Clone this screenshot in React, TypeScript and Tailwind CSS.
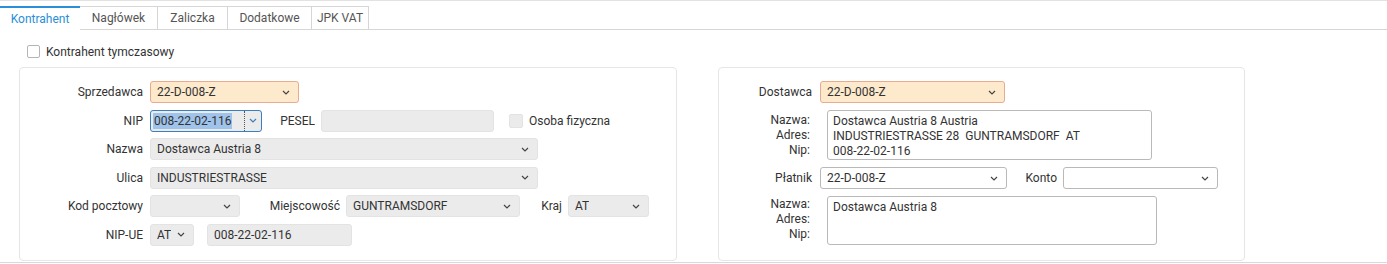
import React from 'react';

const font = { fontFamily: 'Roboto, "Liberation Sans", sans-serif' };

function Chevron({ className = '' }: { className?: string }) {
  return (
    <svg width="8" height="5" viewBox="0 0 8 5" className={className}>
      <path d="M1 1l3 3 3-3" fill="none" stroke="#444" strokeWidth="1.2" />
    </svg>
  );
}

function Select({ value = '', w, tone = 'gray' }: { value?: string; w: string; tone?: 'gray' | 'orange' | 'white' }) {
  const tones = {
    gray: 'bg-[#ebebeb] border-[#e3e3e3]',
    orange: 'bg-[#fde9cc] border-[#e8ab90]',
    white: 'bg-white border-[#b9b9b9]',
  };
  return (
    <div className={`${w} h-[22px] shrink-0 flex items-center justify-between border rounded-[3px] pl-[6px] pr-[8px] ${tones[tone]}`}>
      <span className="truncate">{value}</span>
      <Chevron />
    </div>
  );
}

function Input({ value = '', w }: { value?: string; w: string }) {
  return (
    <div className={`${w} h-[22px] shrink-0 flex items-center border border-[#e3e3e3] bg-[#ebebeb] rounded-[3px] px-[6px]`}>
      {value}
    </div>
  );
}

function Label({ text, w, pr = 'pr-[7px]' }: { text: string; w: string; pr?: string }) {
  return <div className={`${w} ${pr} shrink-0 text-right`}>{text}</div>;
}

const tabs = ['Kontrahent', 'Nagłówek', 'Zaliczka', 'Dodatkowe', 'JPK VAT'];
const tabWidths = ['w-[80px]', 'w-[78px]', 'w-[70px]', 'w-[84px]', 'w-[57px]'];

export default function App() {
  return (
    <div className="w-[1387px] h-[264px] bg-white text-[12px] text-[#333] border-t border-[#e2e2e2] overflow-hidden" style={font}>
      {/* Tabs */}
      <div className="flex mt-[5px] h-[24px]">
        {tabs.map((t, i) => (
          <div
            key={t}
            className={`${tabWidths[i]} flex items-center justify-center ${
              i === 0
                ? 'border-t-2 border-[#2a8fd6] text-[#2a8fd6] border-b border-b-white'
                : 'border border-l-0 border-[#d6d6d6] text-[#555] first:border-l'
            }`}
          >
            {t}
          </div>
        ))}
        <div className="flex-1 border-b border-[#d6d6d6]" />
      </div>

      {/* Kontrahent tymczasowy */}
      <div className="flex items-center mt-[15px] ml-[27px] h-[13px]">
        <div className="w-[13px] h-[13px] border border-[#b5b5b5] rounded-[2px] bg-white" />
        <span className="ml-[6px]">Kontrahent tymczasowy</span>
      </div>

      <div className="flex mt-[9px] ml-[19px] gap-[41px]">
        {/* Sprzedawca */}
        <div className="w-[658px] h-[194px] border border-[#e6e6e6] rounded-[4px] pt-[13px] flex flex-col gap-[6.6px]">
          <div className="flex items-center">
            <Label text="Sprzedawca" w="w-[130px]" />
            <Select value="22-D-008-Z" w="w-[149px]" tone="orange" />
          </div>
          <div className="flex items-center">
            <Label text="NIP" w="w-[130px]" />
            <div className="w-[112px] h-[22px] shrink-0 flex items-center border border-[#3a7fbf] rounded-[3px] bg-[#ebebeb]">
              <div className="flex-1 h-full flex items-center pl-[2px] border-r border-dotted border-[#555]">
                <span className="bg-[#9fc3ea] px-[1px] leading-[16px]">008-22-02-116</span>
              </div>
              <div className="w-[16px] flex justify-center">
                <svg width="8" height="5" viewBox="0 0 8 5">
                  <path d="M1 1l3 3 3-3" fill="none" stroke="#3a7fbf" strokeWidth="1.2" />
                </svg>
              </div>
            </div>
            <Label text="PESEL" w="w-[59px]" pr="pr-[6px]" />
            <Input w="w-[173px]" />
            <div className="ml-[15px] w-[14px] h-[14px] bg-[#ebebeb] border border-[#e3e3e3] rounded-[2px]" />
            <span className="ml-[6px]">Osoba fizyczna</span>
          </div>
          <div className="flex items-center">
            <Label text="Nazwa" w="w-[130px]" />
            <Select value="Dostawca Austria 8" w="w-[388px]" />
          </div>
          <div className="flex items-center">
            <Label text="Ulica" w="w-[130px]" />
            <Select value="INDUSTRIESTRASSE" w="w-[388px]" />
          </div>
          <div className="flex items-center">
            <Label text="Kod pocztowy" w="w-[130px]" />
            <Select w="w-[90px]" />
            <Label text="Miejscowość" w="w-[106px]" pr="pr-[6px]" />
            <Select value="GUNTRAMSDORF" w="w-[174px]" />
            <Label text="Kraj" w="w-[48px]" pr="pr-[6px]" />
            <Select value="AT" w="w-[81px]" />
          </div>
          <div className="flex items-center">
            <Label text="NIP-UE" w="w-[130px]" />
            <Select value="AT" w="w-[44px]" />
            <div className="ml-[13px]">
              <Input value="008-22-02-116" w="w-[145px]" />
            </div>
          </div>
        </div>

        {/* Dostawca */}
        <div className="w-[527px] h-[194px] border border-[#e6e6e6] rounded-[4px] pt-[13px] flex flex-col gap-[7px]">
          <div className="flex items-center">
            <Label text="Dostawca" w="w-[101px]" pr="pr-[8px]" />
            <Select value="22-D-008-Z" w="w-[185px]" tone="orange" />
          </div>
          <div className="flex items-start">
            <div className="w-[108px] pr-[17px] text-right leading-[15px] pt-[3px] shrink-0">
              <div>Nazwa:</div>
              <div>Adres:</div>
              <div>Nip:</div>
            </div>
            <div className="w-[325px] h-[50px] border border-[#b9b9b9] rounded-[3px] px-[5px] pt-[3px] leading-[15px] whitespace-pre">
              <div>Dostawca Austria 8 Austria</div>
              <div>INDUSTRIESTRASSE 28  GUNTRAMSDORF  AT</div>
              <div>008-22-02-116</div>
            </div>
          </div>
          <div className="flex items-center">
            <Label text="Płatnik" w="w-[101px]" pr="pr-[8px]" />
            <Select value="22-D-008-Z" w="w-[187px]" tone="white" />
            <Label text="Konto" w="w-[56px]" pr="pr-[6px]" />
            <Select w="w-[155px]" tone="white" />
          </div>
          <div className="flex items-start">
            <div className="w-[108px] pr-[17px] text-right leading-[15px] pt-[1px] shrink-0">
              <div>Nazwa:</div>
              <div>Adres:</div>
              <div>Nip:</div>
            </div>
            <div className="w-[330px] h-[49px] border border-[#b9b9b9] rounded-[3px] px-[5px] pt-[3px] leading-[15px]">
              Dostawca Austria 8
            </div>
          </div>
        </div>
      </div>

      <div className="mt-[1px] border-t border-[#d9d9d9]" />
    </div>
  );
}
